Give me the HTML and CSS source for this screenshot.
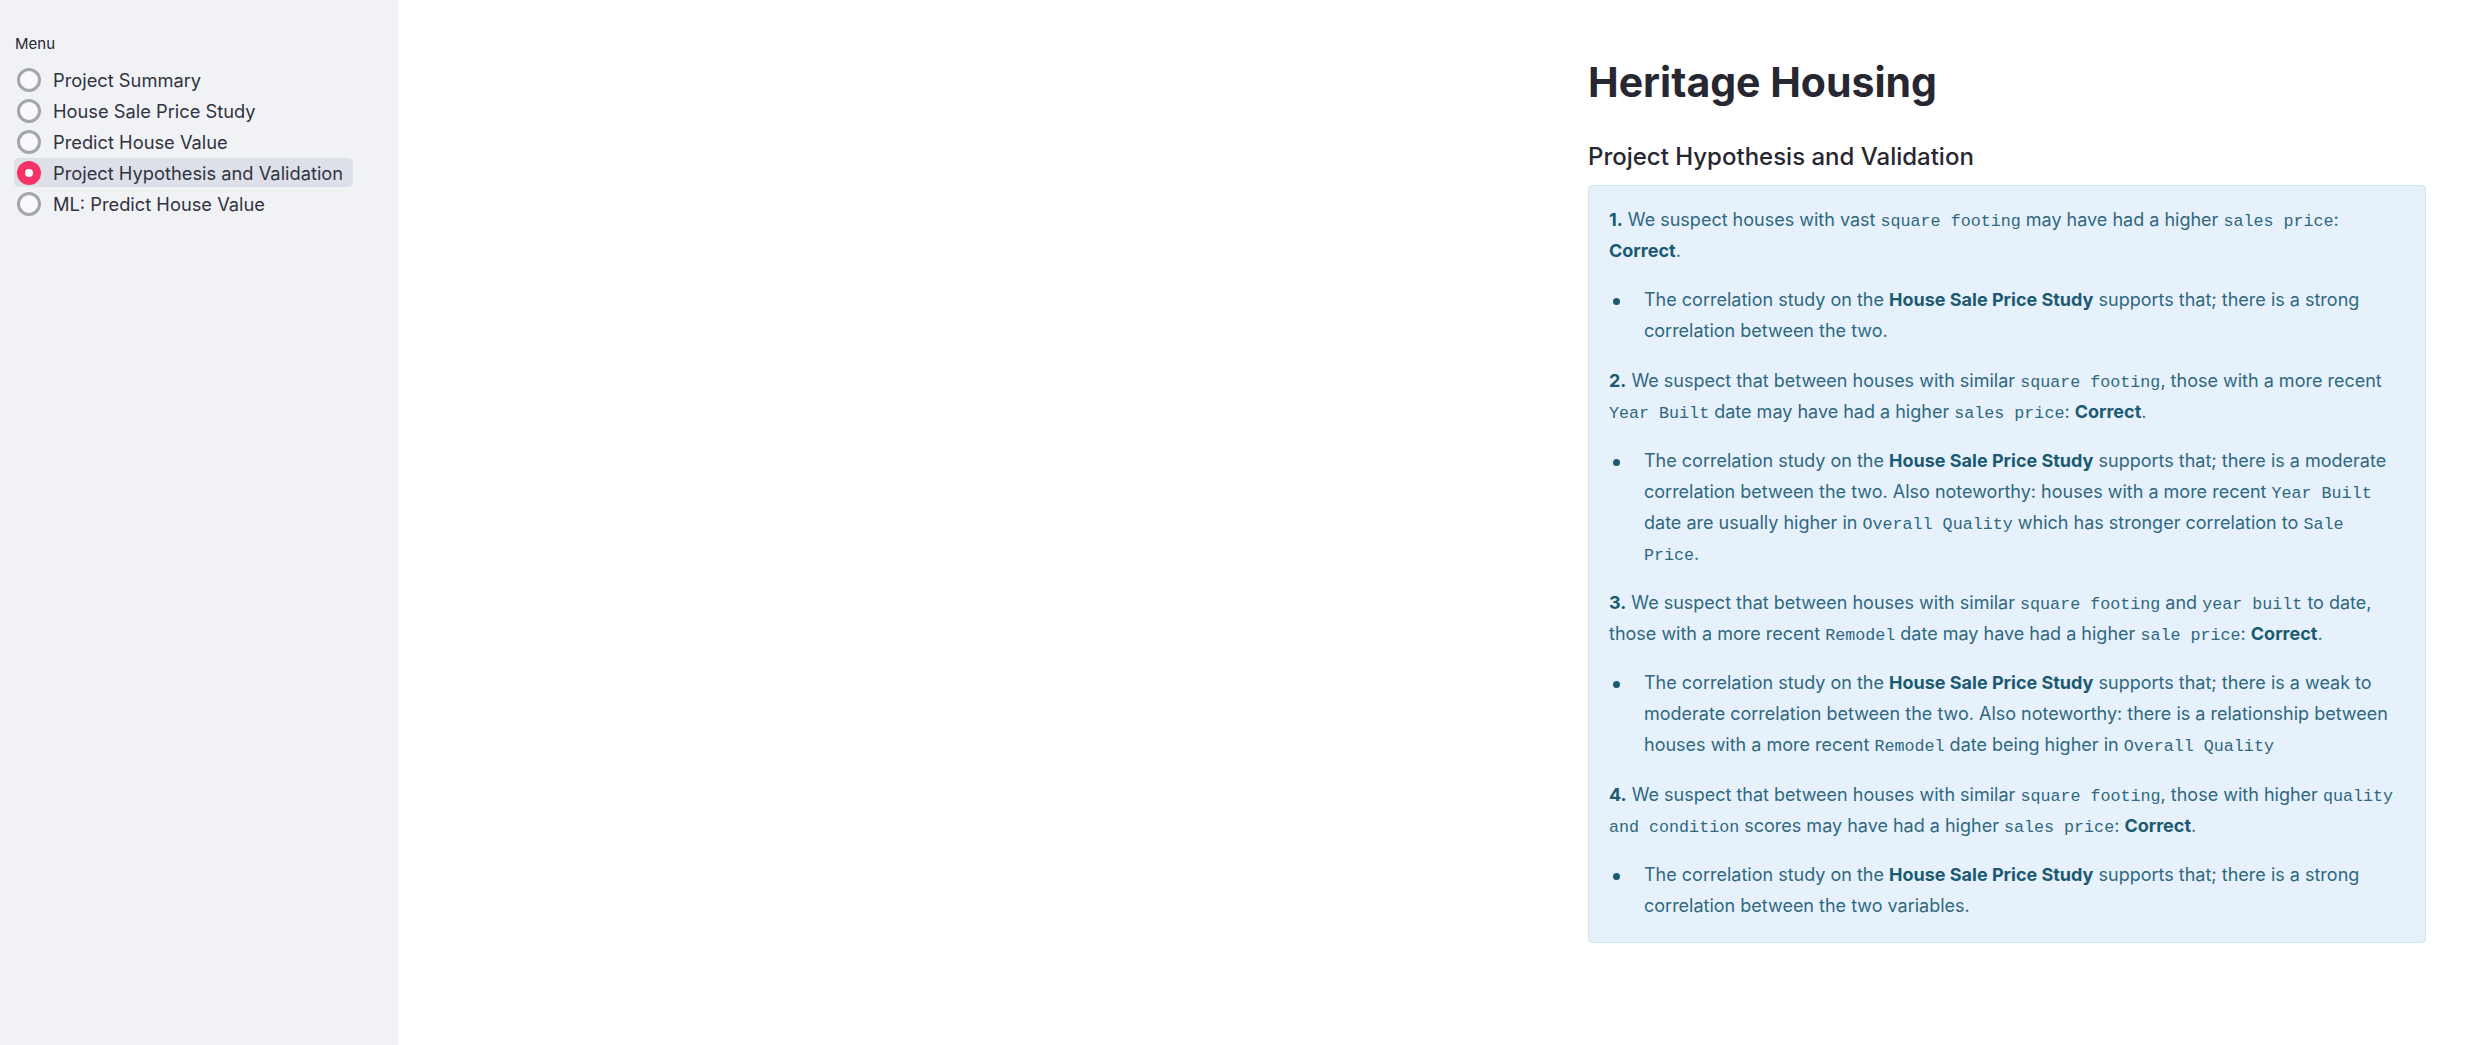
FILE: index.html
```html
<!DOCTYPE html>
<html lang="en">
<head>
<meta charset="utf-8">
<title>Heritage Housing</title>
<link rel="stylesheet" href="styles.css">
</head>
<body>
<aside class="sidebar">
  <div class="menu-label">Menu</div>
  <div class="radio-group">
    <div class="radio-row"><span class="radio"></span><span class="radio-text">Project Summary</span></div>
    <div class="radio-row"><span class="radio"></span><span class="radio-text">House Sale Price Study</span></div>
    <div class="radio-row"><span class="radio"></span><span class="radio-text">Predict House Value</span></div>
    <div class="radio-row selected"><span class="radio on"></span><span class="radio-text">Project Hypothesis and Validation</span></div>
    <div class="radio-row"><span class="radio"></span><span class="radio-text">ML: Predict House Value</span></div>
  </div>
</aside>
<main class="main">
  <div class="block">
    <h1 class="title">Heritage Housing</h1>
    <h3 class="subtitle">Project Hypothesis and Validation</h3>
    <div class="info">
      <p><strong>1.</strong> We suspect houses with vast <code>square footing</code> may have had a higher <code>sales price</code>: <strong>Correct</strong>.</p>
      <ul><li>The correlation study on the <strong>House Sale Price Study</strong> supports that; there is a strong correlation between the two.</li></ul>
      <p><strong>2.</strong> We suspect that between houses with similar <code>square footing</code>, those with a more recent <code>Year Built</code> date may have had a higher <code>sales price</code>: <strong>Correct</strong>.</p>
      <ul><li>The correlation study on the <strong>House Sale Price Study</strong> supports that; there is a moderate correlation between the two. Also noteworthy: houses with a more recent <code>Year Built</code> date are usually higher in <code>Overall Quality</code> which has stronger correlation to <code>Sale Price</code>.</li></ul>
      <p><strong>3.</strong> We suspect that between houses with similar <code>square footing</code> and <code>year built</code> to date, those with a more recent <code>Remodel</code> date may have had a higher <code>sale price</code>: <strong>Correct</strong>.</p>
      <ul><li>The correlation study on the <strong>House Sale Price Study</strong> supports that; there is a weak to moderate correlation between the two. Also noteworthy: there is a relationship between houses with a more recent <code>Remodel</code> date being higher in <code>Overall Quality</code></li></ul>
      <p><strong>4.</strong> We suspect that between houses with similar <code>square footing</code>, those with higher <code>quality and condition</code> scores may have had a higher <code>sales price</code>: <strong>Correct</strong>.</p>
      <ul><li>The correlation study on the <strong>House Sale Price Study</strong> supports that; there is a strong correlation between the two variables.</li></ul>
    </div>
  </div>
</main>
</body>
</html>
```

FILE: styles.css
```css
* { box-sizing: border-box; }
html, body { margin: 0; padding: 0; height: 100%; }
body {
  display: flex;
  font-family: "Inter", "Noto Sans", sans-serif;
  color: #262730;
  background: #ffffff;
}
.sidebar {
  width: 398px;
  flex: 0 0 398px;
  background: #f0f2f6;
  padding: 34px 0 0 14px;
}
.menu-label {
  font-size: 15px;
  line-height: 20px;
  padding-left: 1px;
  color: #262730;
}
.radio-group {
  margin-top: 11px;
  display: flex;
  flex-direction: column;
  align-items: flex-start;
  gap: 2px;
}
.radio-row {
  display: inline-flex;
  align-items: center;
  height: 29px;
  padding: 0 10px 0 3px;
  border-radius: 5px;
  font-size: 18.3px;
  color: #31333f;
}
.radio-row.selected { background: #dde0e9; }
.radio {
  width: 24px;
  height: 24px;
  border-radius: 50%;
  border: 3px solid #a3a6ae;
  background: #f9f9fb;
  margin-right: 12px;
  flex: 0 0 auto;
}
.radio.on {
  border: 8px solid #f63366;
  background: #ffffff;
}
.main {
  flex: 1;
  display: flex;
}
.block {
  width: 838px;
  margin-left: auto;
  margin-right: 55px;
  padding-top: 52px;
}
.title {
  margin: 0;
  font-size: 41px;
  line-height: 60px;
  font-weight: 700;
  color: #262730;
}
.subtitle {
  margin: 30px 0 13px;
  font-size: 24px;
  line-height: 30px;
  font-weight: 500;
  color: #262730;
}
.info {
  background: #e6f1fb;
  border: 1px solid #d3e5f6;
  border-radius: 4px;
  padding: 19px 20px 20px;
  color: #2f6880;
  font-size: 18px;
  line-height: 30.9px;
}
.info p { margin: 0 0 18.5px; }
.info ul { margin: 0 0 18.5px; padding-left: 35px; }
.info ul:last-child { margin-bottom: 0; }
.info li { list-style: none; }
.info li::before {
  content: "";
  display: inline-block;
  width: 7px;
  height: 7px;
  border-radius: 50%;
  background: #1c5a72;
  margin-left: -31px;
  margin-right: 24px;
  vertical-align: middle;
}
.info strong { font-weight: 700; color: #1c5a72; }
.info code {
  font-family: "Liberation Mono", monospace;
  font-size: 16.7px;
  line-height: 1;
  color: #2f6880;
}
```
